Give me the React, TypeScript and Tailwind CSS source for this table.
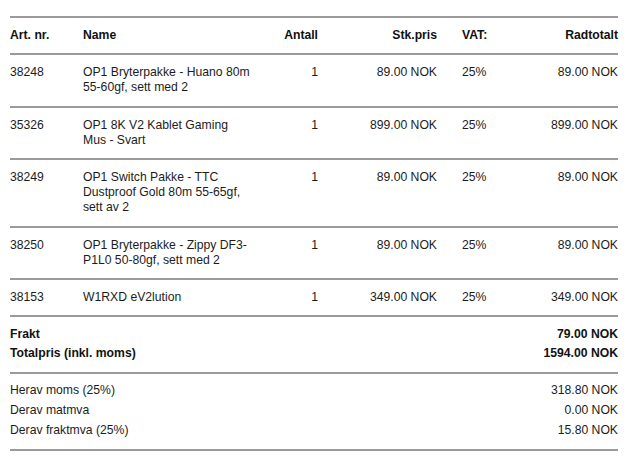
import React from 'react';

interface OrderLine {
  sku: string;
  name: string;
  qty: number;
  unitPrice: string;
  vat: string;
  total: string;
}

const lines: OrderLine[] = [
  { sku: '38248', name: 'OP1 Bryterpakke - Huano 80m 55-60gf, sett med 2', qty: 1, unitPrice: '89.00 NOK', vat: '25%', total: '89.00 NOK' },
  { sku: '35326', name: 'OP1 8K V2 Kablet Gaming Mus - Svart', qty: 1, unitPrice: '899.00 NOK', vat: '25%', total: '899.00 NOK' },
  { sku: '38249', name: 'OP1 Switch Pakke - TTC Dustproof Gold 80m 55-65gf, sett av 2', qty: 1, unitPrice: '89.00 NOK', vat: '25%', total: '89.00 NOK' },
  { sku: '38250', name: 'OP1 Bryterpakke - Zippy DF3-P1L0 50-80gf, sett med 2', qty: 1, unitPrice: '89.00 NOK', vat: '25%', total: '89.00 NOK' },
  { sku: '38153', name: 'W1RXD eV2lution', qty: 1, unitPrice: '349.00 NOK', vat: '25%', total: '349.00 NOK' },
];

const taxes = [
  { label: 'Herav moms (25%)', value: '318.80 NOK' },
  { label: 'Derav matmva', value: '0.00 NOK' },
  { label: 'Derav fraktmva (25%)', value: '15.80 NOK' },
];

const cols = 'grid grid-cols-[73px_170px_65px_119px_63px_1fr]';

export default function App() {
  return (
    <div className="min-h-[466px] bg-white pt-[16px] font-['Liberation_Sans',Arial,sans-serif] text-[12.2px] leading-[15.2px] text-[#1c1c1c]">
      <div className="ml-[10px] w-[608px]">
        <div className={`${cols} border-t-2 border-[#9a9a9a] py-[10px] font-bold text-[#111]`}>
          <span>Art. nr.</span>
          <span>Name</span>
          <span className="text-right">Antall</span>
          <span className="text-right">Stk.pris</span>
          <span className="pl-[25px]">VAT:</span>
          <span className="text-right">Radtotalt</span>
        </div>

        {lines.map((line) => (
          <div key={line.sku} className={`${cols} border-t-2 border-[#9a9a9a] py-[10px]`}>
            <span>{line.sku}</span>
            <span className="pr-[1px]">{line.name}</span>
            <span className="text-right">{line.qty}</span>
            <span className="text-right">{line.unitPrice}</span>
            <span className="pl-[25px]">{line.vat}</span>
            <span className="text-right">{line.total}</span>
          </div>
        ))}

        <div className="flex flex-col gap-[3.8px] border-t-2 border-[#9a9a9a] pt-[9.5px] pb-[11px] font-bold text-[#111]">
          <div className="flex justify-between">
            <span>Frakt</span>
            <span>79.00 NOK</span>
          </div>
          <div className="flex justify-between">
            <span>Totalpris (inkl. moms)</span>
            <span>1594.00 NOK</span>
          </div>
        </div>

        <div className="flex flex-col gap-[4.8px] border-t-2 border-b-2 border-[#9a9a9a] pt-[9.5px] pb-[10.5px]">
          {taxes.map((t) => (
            <div key={t.label} className="flex justify-between">
              <span>{t.label}</span>
              <span>{t.value}</span>
            </div>
          ))}
        </div>
      </div>
    </div>
  );
}
